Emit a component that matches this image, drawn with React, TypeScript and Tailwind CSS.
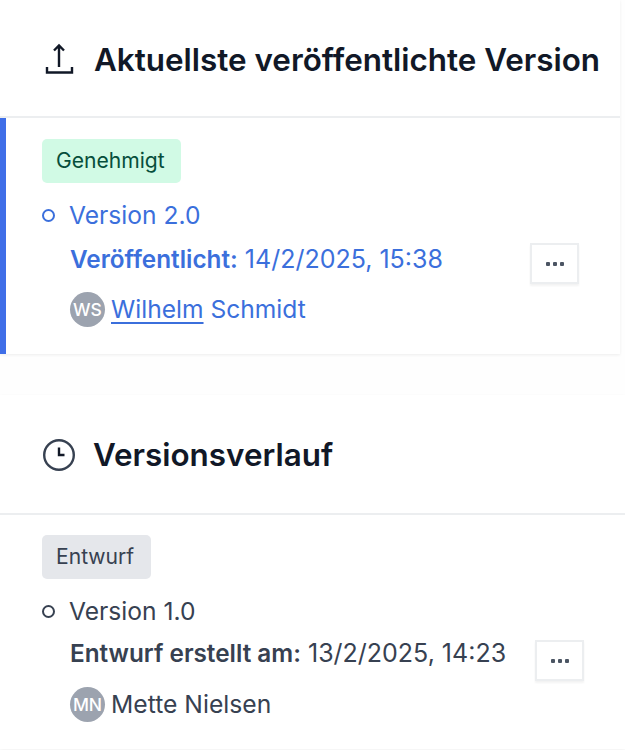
import React from 'react';

const Dots = () => (
  <button className="flex h-[41px] w-[49px] items-center justify-center border-2 border-[#eceef0] bg-white shadow-[0_2px_2px_rgba(0,0,0,0.05)]">
    <svg width="18" height="4" viewBox="0 0 18 4" fill="#4b5563">
      <rect x="0" y="0" width="4" height="4" rx="1" />
      <rect x="7" y="0" width="4" height="4" rx="1" />
      <rect x="14" y="0" width="4" height="4" rx="1" />
    </svg>
  </button>
);

const Avatar = ({ initials }: { initials: string }) => (
  <span className="flex h-[35px] w-[35px] shrink-0 items-center justify-center rounded-full bg-[#9ca3af] text-[17.5px] font-medium leading-none text-white">
    {initials}
  </span>
);

const App = () => {
  return (
    <div className="h-[750px] w-[625px] overflow-hidden bg-[#fefefe] font-['Inter',sans-serif]">
      <section className="mr-[5px] bg-white shadow-[0_1px_3px_rgba(0,0,0,0.07)]">
        <header className="flex h-[118px] items-center gap-[18px] border-b-2 border-[#eceef0] pl-[44px] pt-[4px]">
          <svg width="32" height="34" viewBox="0 0 32 34" fill="none" stroke="#111827" strokeWidth="2.4" className="shrink-0">
            <path d="M15 24V2.5M10 7.5l5-5 5 5" />
            <path d="M3 24v5.5h25V24" />
          </svg>
          <h2 className="mt-[2px] whitespace-nowrap text-[31.4px] font-semibold text-[#111827]">Aktuellste veröffentlichte Version</h2>
        </header>
        <div className="flex h-[236px] flex-col border-l-[6px] border-[#3f6ee8] pl-[36px] pt-[21px] text-[#3b6fdc]">
          <span className="flex h-[44px] w-[139px] items-center rounded-[5px] bg-[#d1fae5] pl-[14px] text-[21.1px] text-[#064e3b]">Genehmigt</span>
          <div className="mt-[13px] flex h-[38px] items-center gap-[14px]">
            <span className="mt-[1px] h-[13px] w-[13px] rounded-full border-2 border-[#3b6fdc]" />
            <span className="text-[24.6px]">Version 2.0</span>
          </div>
          <div className="flex items-start">
            <p className="ml-[28px] mt-[7px] w-[460px] whitespace-nowrap text-[25px]">
              <span className="text-[24.3px] font-semibold">Veröffentlicht:</span> 14/2/2025, 15:38
            </p>
            <div className="mt-[9px]">
              <Dots />
            </div>
          </div>
          <div className="ml-[28px] mt-[7px] flex items-center gap-[6px] text-[24.6px]">
            <Avatar initials="WS" />
            <span>
              <span className="underline decoration-2 underline-offset-[4px]">Wilhelm</span> Schmidt
            </span>
          </div>
        </div>
      </section>

      <section className="mt-[41px] bg-white shadow-[0_1px_3px_rgba(0,0,0,0.05)]">
        <header className="flex h-[120px] items-center gap-[18px] border-b-2 border-[#eceef0] pl-[43px] pt-[2px]">
          <svg width="32" height="32" viewBox="0 0 32 32" fill="none" stroke="#374151" strokeWidth="2.4" className="shrink-0">
            <circle cx="16" cy="16" r="14.8" />
            <path d="M16 8.5v7.5h5.5" stroke="#111827" />
          </svg>
          <h2 className="mt-[2px] whitespace-nowrap text-[31.4px] font-semibold text-[#111827]">Versionsverlauf</h2>
        </header>
        <div className="flex h-[234px] flex-col pl-[42px] pt-[20px] text-[#374151]">
          <span className="flex h-[44px] w-[109px] items-center rounded-[5px] bg-[#e5e7eb] pl-[14px] text-[21.1px]">Entwurf</span>
          <div className="mt-[13px] flex h-[38px] items-center gap-[14px]">
            <span className="mt-[1px] h-[13px] w-[13px] rounded-full border-2 border-[#374151]" />
            <span className="text-[24.6px]">Version 1.0</span>
          </div>
          <div className="flex items-start">
            <p className="ml-[28px] mt-[5px] w-[465px] whitespace-nowrap text-[25px]">
              <span className="text-[24.3px] font-semibold">Entwurf erstellt am:</span> 13/2/2025, 14:23
            </p>
            <div className="mt-[10px]">
              <Dots />
            </div>
          </div>
          <div className="ml-[28px] mt-[5px] flex items-center gap-[6px] text-[24.7px]">
            <Avatar initials="MN" />
            <span>Mette Nielsen</span>
          </div>
        </div>
      </section>
    </div>
  );
};

export default App;
